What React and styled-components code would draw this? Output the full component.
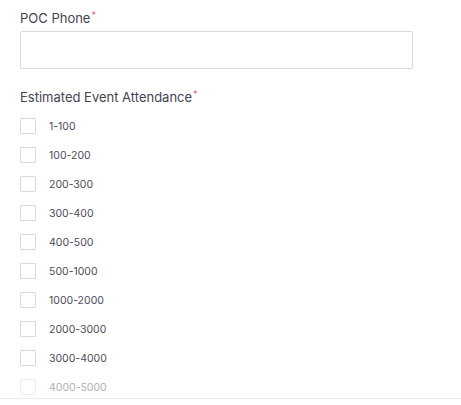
import React from "react";
import styled, { createGlobalStyle } from "styled-components";

const Global = createGlobalStyle`
  html, body { margin: 0; padding: 0; background: #fff; }
  body { font-family: Inter, "Noto Sans", sans-serif; color: #3c3b4d; }
`;

const Page = styled.div`
  position: relative;
  width: 461px;
  height: 405px;
  overflow: hidden;
  display: flex;
  flex-direction: column;
`;

const Scroll = styled.div`
  flex: 1;
  overflow: hidden;
  padding: 10px 20px 0 20px;
  position: relative;
`;

const Field = styled.div`
  display: flex;
  flex-direction: column;
  margin-bottom: ${(p) => p.$mb || 0}px;
`;

const Label = styled.div`
  font-size: 13px;
  line-height: 16px;
  color: #44434f;
`;

const Req = styled.span`
  color: #e2505f;
  font-size: 9px;
  vertical-align: top;
  position: relative;
  top: -3px;
  margin-left: 1px;
`;

const Input = styled.input`
  box-sizing: border-box;
  width: 393px;
  height: 38px;
  margin-top: 5px;
  border: 1px solid #d9d8e0;
  border-radius: 2px;
  outline: none;
  font: inherit;
  background: #fff;
`;

const Options = styled.div`
  display: flex;
  flex-direction: column;
  gap: 13px;
  margin-top: 13px;
`;

const Option = styled.label`
  display: flex;
  align-items: center;
  gap: 13px;
  height: 16px;
  font-size: 10.5px;
  color: #4d4c5a;
`;

const Box = styled.span`
  box-sizing: border-box;
  width: 16px;
  height: 16px;
  border: 1px solid #d9d8e0;
  border-radius: 1px;
  background: #fff;
  flex: none;
`;

const Fade = styled.div`
  position: absolute;
  left: 0;
  right: 0;
  bottom: 0;
  height: 26px;
  background: linear-gradient(to bottom, rgba(255,255,255,0.45), rgba(255,255,255,0.6));
  pointer-events: none;
`;

const Footer = styled.div`
  height: 6px;
  border-top: 1px solid #ececf0;
  background: #fff;
  flex: none;
`;

const ranges = [
  "1-100",
  "100-200",
  "200-300",
  "300-400",
  "400-500",
  "500-1000",
  "1000-2000",
  "2000-3000",
  "3000-4000",
  "4000-5000",
];

export default function App() {
  return (
    <>
      <Global />
      <Page>
        <Scroll>
          <Field $mb={20}>
            <Label>
              POC Phone<Req>*</Req>
            </Label>
            <Input type="text" />
          </Field>
          <Field>
            <Label>
              Estimated Event Attendance<Req>*</Req>
            </Label>
            <Options>
              {ranges.map((r) => (
                <Option key={r}>
                  <Box />
                  {r}
                </Option>
              ))}
            </Options>
          </Field>
          <Fade />
        </Scroll>
        <Footer />
      </Page>
    </>
  );
}
